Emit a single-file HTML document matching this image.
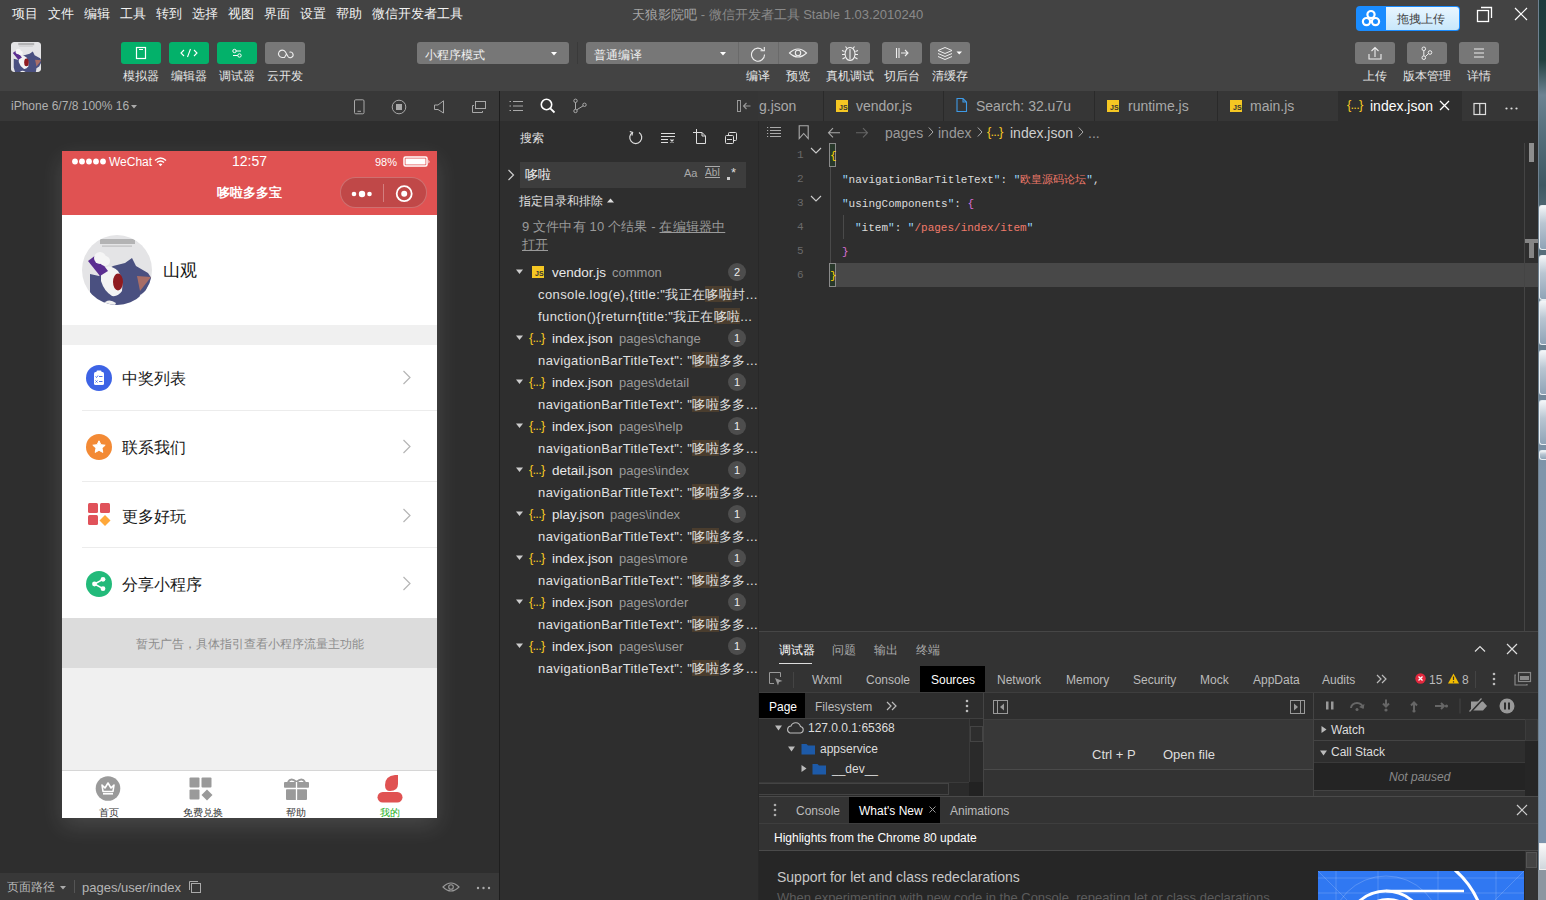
<!DOCTYPE html>
<html><head><meta charset="utf-8">
<style>
*{box-sizing:border-box;margin:0;padding:0}
html,body{width:1546px;height:900px;overflow:hidden;background:#434343;font-family:"Liberation Sans",sans-serif;}
.a{position:absolute}
.t{position:absolute;white-space:nowrap;line-height:1}
svg{position:absolute;overflow:visible}
.code{font-family:"Liberation Mono",monospace;font-size:11px;color:#dcdcdc}
.q{color:#9cdcfe}
.nm{font-size:13.5px;color:#e8e8e8}
.pth{font-size:13px;color:#9a9a9a}
.ln{font-size:13px;color:#e0e0e0;letter-spacing:0.4px}
.dt{top:674px;font-size:12px;color:#bbb}
.sv{color:#f07a6a}
/* top */
#top{left:0;top:0;width:1538px;height:91px;background:#434343}
.mi{top:7px;font-size:13px;color:#f2f2f2}
.gb{top:42px;width:40px;height:22px;border-radius:3px;background:#03b16a}
.gyb{top:42px;width:40px;height:22px;border-radius:3px;background:#787878}
.lbl{top:70px;font-size:12px;color:#e6e6e6;text-align:center;width:80px}
#desk{left:1538px;top:0;width:8px;height:900px;border-left:1px solid #6f8190;background:linear-gradient(#1d3a3c 0,#22403f 60px,#6c8292 95px,#5a7380 125px,#3e5862 185px,#4d6570 205px,#7f95aa 470px,#7c93ab 840px)}
/* simulator */
#sim{left:0;top:91px;width:499px;height:809px;background:#2e2e2e}
#simhd{left:0;top:91px;width:499px;height:30px;background:#383838}
#simft{left:0;top:873px;width:499px;height:27px;background:#383838}
#div1{left:499px;top:91px;width:1px;height:809px;background:#1e1e1e}
/* sidebar */
#side{left:500px;top:91px;width:258px;height:809px;background:#2e2e2e}
#sidehd{left:500px;top:91px;width:258px;height:30px;background:#353535}
/* editor */
#ed{left:758px;top:91px;width:780px;height:541px;background:#2e2e2e}
#tabs{left:758px;top:91px;width:780px;height:30px;background:#363636}
</style></head><body>
<div id="top" class="a"></div>
<div id="desk" class="a"></div>
<div class="a" style="left:1539px;top:205px;width:7px;height:45px;border:1px solid #e8eef2;border-right:none;border-radius:3px 0 0 3px;background:linear-gradient(#f4f6f8,#b9c6d2 40%,#8fa3b6)"></div>
<div class="a" style="left:1539px;top:255px;width:7px;height:45px;border:1px solid #e8eef2;border-right:none;border-radius:3px 0 0 3px;background:linear-gradient(#f4f6f8,#b9c6d2 40%,#8fa3b6)"></div>
<div class="a" style="left:1539px;top:300px;width:7px;height:45px;border:1px solid #e8eef2;border-right:none;border-radius:3px 0 0 3px;background:linear-gradient(#f4f6f8,#b9c6d2 40%,#8fa3b6)"></div>
<div class="a" style="left:1539px;top:350px;width:7px;height:45px;border:1px solid #e8eef2;border-right:none;border-radius:3px 0 0 3px;background:linear-gradient(#f4f6f8,#b9c6d2 40%,#8fa3b6)"></div>
<div class="a" style="left:1539px;top:400px;width:7px;height:45px;border:1px solid #e8eef2;border-right:none;border-radius:3px 0 0 3px;background:linear-gradient(#f4f6f8,#b9c6d2 40%,#8fa3b6)"></div>
<div class="a" style="left:1539px;top:450px;width:7px;height:10px;border:1px solid #e8eef2;border-right:none;border-radius:3px 0 0 3px;background:linear-gradient(#f4f6f8,#b9c6d2 40%,#8fa3b6)"></div>
<div class="a" style="left:1539px;top:843px;width:7px;height:27px;border:1px solid #eee;border-right:none;background:linear-gradient(#fafafa,#d0d6dc)"></div>
<div class="a" style="left:1538px;top:870px;width:8px;height:30px;background:#8c96a0"></div>

<div id="sim" class="a"></div>
<div id="simhd" class="a"></div>
<div id="simft" class="a"></div>
<div id="div1" class="a"></div>
<div id="side" class="a"></div>
<div id="sidehd" class="a"></div>
<div id="ed" class="a"></div>
<div id="tabs" class="a"></div>
<div class="a" style="left:758px;top:121px;width:1px;height:779px;background:#282828"></div>

<!-- menu -->
<div class="t mi" style="left:12px">项目</div>
<div class="t mi" style="left:48px">文件</div>
<div class="t mi" style="left:84px">编辑</div>
<div class="t mi" style="left:120px">工具</div>
<div class="t mi" style="left:156px">转到</div>
<div class="t mi" style="left:192px">选择</div>
<div class="t mi" style="left:228px">视图</div>
<div class="t mi" style="left:264px">界面</div>
<div class="t mi" style="left:300px">设置</div>
<div class="t mi" style="left:336px">帮助</div>
<div class="t mi" style="left:372px">微信开发者工具</div>
<div class="t" style="left:632px;top:8px;font-size:13px;color:#a6a6a6">天狼影院吧 <span style="color:#8a8a8a">- 微信开发者工具 Stable 1.03.2010240</span></div>


<!-- toolbar -->
<svg width="30" height="30" viewBox="4 4 66 66" style="left:11px;top:42px;overflow:hidden;border-radius:3px"><defs><clipPath id="c1"><rect x="4" y="4" width="66" height="66" rx="6"/></clipPath></defs><g clip-path="url(#c1)"><rect width="74" height="74" fill="#e4e4e6"/>
<rect x="20" y="6" width="35" height="5" fill="#8a8a8a" opacity=".55"/>
<rect x="22" y="12.5" width="30" height="1.2" fill="#999" opacity=".5"/>
<path d="M10 41 L19 43 L25 38 L33 33 L45 30 L52 25 L56 33 L68 40 L72 46 L66 58 L60 62 L58 74 H14 L10 60Z" fill="#4a5080"/>
<path d="M57 43 L71 44 L60 58Z" fill="#a86d66"/>
<path d="M21 36 Q30 30 38 38 Q44 46 42 58 Q38 64 32 63 Q24 58 21 48Z" fill="#f3f3f3"/>
<ellipse cx="38" cy="49" rx="5" ry="8.5" fill="#8f1b20"/>
<path d="M8 28 L16 22 L28 38 L20 43Z" fill="#5b2e91"/>
<circle cx="20" cy="25" r="6" fill="#f5f5f5"/>
<circle cx="25" cy="28" r="5" fill="#f5f5f5"/>
<path d="M22 72 Q28 64 36 70 L34 74 H22Z" fill="#f0f0f0"/></g></svg>
<div class="a gb" style="left:121px"><svg width="40" height="22" style="left:0;top:0"><rect x="15.5" y="5.5" width="9" height="11" fill="none" stroke="#fff" stroke-width="1.2"/><line x1="18" y1="7.5" x2="22" y2="7.5" stroke="#fff" stroke-width="1"/></svg></div>
<div class="a gb" style="left:169px"><svg width="40" height="22" style="left:0;top:0"><path d="M15 8 L12 11 L15 14 M25 8 L28 11 L25 14 M21.5 7 L18.5 15" fill="none" stroke="#fff" stroke-width="1.1"/></svg></div>
<div class="a gb" style="left:217px"><svg width="40" height="22" style="left:0;top:0"><path d="M16 9 H24 M16 13.5 H24" stroke="#fff" stroke-width="1"/><circle cx="17.5" cy="9" r="1.7" fill="#03b16a" stroke="#fff" stroke-width="1"/><circle cx="22.5" cy="13.5" r="1.7" fill="#03b16a" stroke="#fff" stroke-width="1"/></svg></div>
<div class="a gyb" style="left:265px"><svg width="40" height="22" style="left:0;top:0"><path d="M17 15.5 A3.7 3.7 0 1 1 20.3 9.8 L23 14.5 A2.8 2.8 0 1 0 24.5 10.2 M21.5 12 L19.5 15.5 H17" fill="none" stroke="#eee" stroke-width="1.1"/></svg></div>
<div class="t lbl" style="left:101px">模拟器</div>
<div class="t lbl" style="left:149px">编辑器</div>
<div class="t lbl" style="left:197px">调试器</div>
<div class="t lbl" style="left:245px">云开发</div>

<div class="a" style="left:417px;top:42px;width:152px;height:22px;border-radius:3px;background:#777"></div>
<div class="t" style="left:425px;top:49px;font-size:12px;color:#f0f0f0">小程序模式</div>
<svg width="8" height="5" style="left:551px;top:52px"><path d="M0 0 H6 L3 3.5Z" fill="#fff"/></svg>
<div class="a" style="left:577px;top:42px;width:1px;height:22px;background:#3a3a3a"></div>
<div class="a" style="left:586px;top:42px;width:232px;height:22px;border-radius:3px;background:#777"></div>
<div class="a" style="left:738px;top:42px;width:1px;height:22px;background:#6a6a6a"></div>
<div class="a" style="left:778px;top:42px;width:1px;height:22px;background:#6a6a6a"></div>
<div class="t" style="left:594px;top:49px;font-size:12px;color:#f0f0f0">普通编译</div>
<svg width="8" height="5" style="left:720px;top:52px"><path d="M0 0 H6 L3 3.5Z" fill="#fff"/></svg>
<svg width="40" height="22" style="left:739px;top:42px"><path d="M24 8.5 A6.5 6.5 0 1 0 25.5 12.5" fill="none" stroke="#eee" stroke-width="1.1"/><path d="M21.5 8.8 L25.3 8.8 L25.3 5" fill="none" stroke="#eee" stroke-width="1.1"/></svg>
<svg width="40" height="22" style="left:778px;top:42px"><path d="M11.5 11 Q20 3 28.5 11 Q20 19 11.5 11Z" fill="none" stroke="#eee" stroke-width="1.1"/><circle cx="20" cy="11" r="2.7" fill="none" stroke="#eee" stroke-width="1.1"/></svg>
<div class="a" style="left:830px;top:42px;width:40px;height:22px;border-radius:3px;background:#777"></div>
<svg width="40" height="22" style="left:830px;top:42px"><path d="M20 5.5 a5 6.5 0 1 0 0.1 0Z M20 7 V17.5 M17 6.5 L15.5 4.5 M23 6.5 L24.5 4.5 M14.5 9.5 L12 8.5 M25.5 9.5 L28 8.5 M14.5 12.5 H12 M25.5 12.5 H28 M15 15.5 L12.5 17 M25 15.5 L27.5 17" fill="none" stroke="#eee" stroke-width="1.1"/></svg>
<div class="a" style="left:882px;top:42px;width:40px;height:22px;border-radius:3px;background:#777"></div>
<svg width="40" height="22" style="left:882px;top:42px"><path d="M14.5 6 V16 M17 6 V16 M19 11 H26 M23 8 L26 11 L23 14" fill="none" stroke="#eee" stroke-width="1.1"/></svg>
<div class="a" style="left:930px;top:42px;width:40px;height:22px;border-radius:3px;background:#777"></div>
<svg width="40" height="22" style="left:930px;top:42px"><path d="M8 8.5 L15 5.5 L22 8.5 L15 11.5Z M8 11.5 L15 14.5 L22 11.5 M8 14.5 L15 17.5 L22 14.5" fill="none" stroke="#eee" stroke-width="1"/><path d="M26.5 9.5 H32 L29.25 12.5Z" fill="#fff"/></svg>
<div class="t lbl" style="left:718px">编译</div>
<div class="t lbl" style="left:758px">预览</div>
<div class="t lbl" style="left:810px">真机调试</div>
<div class="t lbl" style="left:862px">切后台</div>
<div class="t lbl" style="left:910px">清缓存</div>

<div class="a" style="left:1356px;top:6px;width:104px;height:25px;border-radius:4px;background:#1a8cff;"></div>
<div class="a" style="left:1386px;top:7px;width:73px;height:23px;border-radius:0 3px 3px 0;background:linear-gradient(#e9f6ff,#c8e7fb)"></div>
<svg width="30" height="25" style="left:1356px;top:6px"><circle cx="15" cy="8.6" r="3.6" fill="none" stroke="#fff" stroke-width="2.2"/><circle cx="10.5" cy="15.6" r="3.6" fill="none" stroke="#fff" stroke-width="2.2"/><circle cx="19.5" cy="15.6" r="3.6" fill="none" stroke="#fff" stroke-width="2.2"/></svg>
<div class="t" style="left:1397px;top:13px;font-size:12px;color:#444">拖拽上传</div>
<svg width="18" height="18" style="left:1476px;top:5px"><rect x="1.5" y="5.5" width="11" height="11" fill="none" stroke="#fff" stroke-width="1.3"/><path d="M5 2.5 H15.5 V13" fill="none" stroke="#fff" stroke-width="1.3"/></svg>
<svg width="14" height="14" style="left:1514px;top:7px"><path d="M1 1 L13 13 M13 1 L1 13" stroke="#fff" stroke-width="1.2"/></svg>
<div class="a" style="left:1355px;top:42px;width:40px;height:22px;border-radius:3px;background:#777"></div>
<svg width="40" height="22" style="left:1355px;top:42px"><path d="M14 12 V17 H26 V12 M20 15 V6 M16.5 9 L20 5.5 L23.5 9" fill="none" stroke="#eee" stroke-width="1.1"/></svg>
<div class="a" style="left:1407px;top:42px;width:40px;height:22px;border-radius:3px;background:#777"></div>
<svg width="40" height="22" style="left:1407px;top:42px"><circle cx="16.8" cy="6.8" r="1.8" fill="none" stroke="#eee" stroke-width="1"/><circle cx="16.8" cy="15.7" r="1.8" fill="none" stroke="#eee" stroke-width="1"/><circle cx="23" cy="10.5" r="1.8" fill="none" stroke="#eee" stroke-width="1"/><path d="M16.8 8.6 V13.9 M18.3 14.6 L21.5 11.6" fill="none" stroke="#eee" stroke-width="1"/></svg>
<div class="a" style="left:1459px;top:42px;width:40px;height:22px;border-radius:3px;background:#777"></div>
<svg width="40" height="22" style="left:1459px;top:42px"><path d="M15 7 H25 M15 11 H25 M15 15 H25" stroke="#eee" stroke-width="1.1"/></svg>
<div class="t lbl" style="left:1335px">上传</div>
<div class="t lbl" style="left:1387px">版本管理</div>
<div class="t lbl" style="left:1439px">详情</div>


<!-- simulator header -->
<div class="t" style="left:11px;top:100px;font-size:12px;color:#b0b0b0">iPhone 6/7/8 100% 16</div>
<svg width="7" height="4" style="left:131px;top:105px"><path d="M0 0 H6 L3 3.5Z" fill="#aaa"/></svg>
<svg width="12" height="16" style="left:353px;top:99px"><rect x="1.5" y="0.8" width="9.5" height="14" rx="1.2" fill="none" stroke="#a8a8a8" stroke-width="1"/><line x1="4.5" y1="12.3" x2="8" y2="12.3" stroke="#a8a8a8" stroke-width="1"/></svg>
<svg width="16" height="16" style="left:391px;top:99px"><circle cx="8" cy="8" r="6.8" fill="none" stroke="#a8a8a8" stroke-width="1"/><rect x="5" y="5" width="6" height="6" fill="#a8a8a8"/></svg>
<svg width="12" height="14" style="left:433px;top:100px"><path d="M10.5 0.8 V13 L5 9.5 H1.5 V5 H5Z" fill="none" stroke="#a8a8a8" stroke-width="1"/></svg>
<svg width="16" height="14" style="left:472px;top:101px"><rect x="3.5" y="0.5" width="10" height="7" fill="none" stroke="#a8a8a8" stroke-width="1"/><path d="M2 4.5 H0.5 V11.5 H10.5 V10" fill="none" stroke="#a8a8a8" stroke-width="1"/></svg>

<!-- phone -->
<div class="a" style="left:62px;top:151px;width:375px;height:667px;background:#f0f0f0;box-shadow:0 8px 22px rgba(255,255,255,.13)"></div>
<div class="a" style="left:62px;top:151px;width:375px;height:64px;background:#e05252"></div>
<svg width="40" height="10" style="left:71px;top:157px"><circle cx="4" cy="4.5" r="2.9" fill="#fff"/><circle cx="11" cy="4.5" r="2.9" fill="#fff"/><circle cx="18" cy="4.5" r="2.9" fill="#fff"/><circle cx="25" cy="4.5" r="2.9" fill="#fff"/><circle cx="32" cy="4.5" r="2.9" fill="#fff"/></svg>
<div class="t" style="left:109px;top:156px;font-size:12px;color:#fff">WeChat</div>
<svg width="14" height="10" style="left:154px;top:157px"><path d="M1 3.5 Q6.5 -1.5 12 3.5 M3 5.6 Q6.5 2.3 10 5.6" fill="none" stroke="#fff" stroke-width="1.4"/><path d="M4.6 7.2 Q6.5 5.7 8.4 7.2 L6.5 9.3Z" fill="#fff"/></svg>
<div class="t" style="left:232px;top:154px;font-size:14px;color:#fff">12:57</div>
<div class="t" style="left:375px;top:157px;font-size:11px;color:#fff">98%</div>
<svg width="28" height="11" style="left:403px;top:156px"><rect x="1" y="1" width="23" height="9" rx="1.5" fill="none" stroke="#fff" stroke-width="1.5"/><rect x="2.5" y="2.5" width="20" height="6" fill="#fff"/><path d="M25.5 3.5 Q27.3 5.5 25.5 7.5Z" fill="#fff"/></svg>
<div class="t" style="left:62px;top:186px;width:375px;text-align:center;font-size:13px;color:#fff;font-weight:bold">哆啦多多宝</div>
<div class="a" style="left:340px;top:177px;width:87px;height:31px;border-radius:16px;background:#c04848;border:1px solid rgba(255,255,255,.22)"></div>
<div class="a" style="left:383px;top:184px;width:1px;height:18px;background:rgba(255,255,255,.3)"></div>
<svg width="30" height="12" style="left:347px;top:188px"><circle cx="7" cy="6" r="2.3" fill="#fff"/><circle cx="15" cy="6" r="3.2" fill="#fff"/><circle cx="22.5" cy="6" r="2.3" fill="#fff"/></svg>
<svg width="20" height="20" style="left:394px;top:184px"><circle cx="10.2" cy="9.7" r="7.5" fill="none" stroke="#fff" stroke-width="1.8"/><circle cx="10.2" cy="9.7" r="3" fill="#fff"/></svg>

<!-- profile -->
<div class="a" style="left:62px;top:215px;width:375px;height:110px;background:#fff"></div>
<svg width="74" height="74" viewBox="0 0 74 74" style="left:80px;top:233px"><defs><clipPath id="c2"><circle cx="37" cy="37" r="35"/></clipPath></defs><g clip-path="url(#c2)"><rect width="74" height="74" fill="#e4e4e6"/>
<rect x="20" y="6" width="35" height="5" fill="#8a8a8a" opacity=".55"/>
<rect x="22" y="12.5" width="30" height="1.2" fill="#999" opacity=".5"/>
<path d="M10 41 L19 43 L25 38 L33 33 L45 30 L52 25 L56 33 L68 40 L72 46 L66 58 L60 62 L58 74 H14 L10 60Z" fill="#4a5080"/>
<path d="M57 43 L71 44 L60 58Z" fill="#a86d66"/>
<path d="M21 36 Q30 30 38 38 Q44 46 42 58 Q38 64 32 63 Q24 58 21 48Z" fill="#f3f3f3"/>
<ellipse cx="38" cy="49" rx="5" ry="8.5" fill="#8f1b20"/>
<path d="M8 28 L16 22 L28 38 L20 43Z" fill="#5b2e91"/>
<circle cx="20" cy="25" r="6" fill="#f5f5f5"/>
<circle cx="25" cy="28" r="5" fill="#f5f5f5"/>
<path d="M22 72 Q28 64 36 70 L34 74 H22Z" fill="#f0f0f0"/></g></svg>
<div class="t" style="left:163px;top:262px;font-size:17px;color:#111">山观</div>

<!-- menu list -->
<div class="a" style="left:62px;top:345px;width:375px;height:273px;background:#fff"></div>
<div class="a" style="left:82px;top:410px;width:355px;height:1px;background:#ececec"></div>
<div class="a" style="left:82px;top:481px;width:355px;height:1px;background:#ececec"></div>
<div class="a" style="left:82px;top:547px;width:355px;height:1px;background:#ececec"></div>

<svg width="26" height="26" style="left:86px;top:365px"><circle cx="13" cy="13" r="13" fill="#3d63e5"/><rect x="8" y="7" width="10" height="13" rx="1.5" fill="#fff"/><rect x="10.5" y="5.5" width="5" height="3" rx="1" fill="#fff"/><path d="M9.5 11.5 L10.5 12.5 L12 10.5 M13 11.5 H16.5 M9.5 15.5 L11.5 17.5 M11.5 15.5 L9.5 17.5 M13 16.5 H16.5" stroke="#3d63e5" stroke-width="0.9" fill="none"/></svg>
<div class="t" style="left:122px;top:371px;font-size:16px;color:#1a1a1a">中奖列表</div>
<svg width="26" height="26" style="left:86px;top:434px"><circle cx="13" cy="13" r="13" fill="#f38a35"/><path d="M13 6.8 L14.9 10.7 L19.2 11.2 L16 14.1 L16.8 18.4 L13 16.3 L9.2 18.4 L10 14.1 L6.8 11.2 L11.1 10.7Z" fill="#fff" stroke="#fff" stroke-width="1" stroke-linejoin="round"/></svg>
<div class="t" style="left:122px;top:440px;font-size:16px;color:#1a1a1a">联系我们</div>
<svg width="26" height="26" style="left:87px;top:502px"><rect x="1" y="1" width="10" height="10" rx="1.5" fill="#e0525a"/><rect x="13" y="1" width="10" height="10" rx="1.5" fill="#e0525a"/><rect x="1" y="13" width="10" height="10" rx="1.5" fill="#e0525a"/><path d="M18 13 L23.5 18.5 L18 24 L12.5 18.5Z" fill="#ffa83a"/></svg>
<div class="t" style="left:122px;top:509px;font-size:16px;color:#1a1a1a">更多好玩</div>
<svg width="26" height="26" style="left:86px;top:571px"><circle cx="13" cy="13" r="13" fill="#22ba7a"/><circle cx="8.5" cy="13" r="2.4" fill="#fff"/><circle cx="17" cy="8.3" r="2.4" fill="#fff"/><circle cx="17" cy="17.7" r="2.4" fill="#fff"/><path d="M8.5 13 L17 8.3 M8.5 13 L17 17.7" stroke="#fff" stroke-width="1.5"/></svg>
<div class="t" style="left:122px;top:577px;font-size:16px;color:#1a1a1a">分享小程序</div>
<svg width="10" height="16" style="left:402px;top:370px"><path d="M1.5 1 L8 7.5 L1.5 14" fill="none" stroke="#b5b5b5" stroke-width="1.2"/></svg>
<svg width="10" height="16" style="left:402px;top:439px"><path d="M1.5 1 L8 7.5 L1.5 14" fill="none" stroke="#b5b5b5" stroke-width="1.2"/></svg>
<svg width="10" height="16" style="left:402px;top:508px"><path d="M1.5 1 L8 7.5 L1.5 14" fill="none" stroke="#b5b5b5" stroke-width="1.2"/></svg>
<svg width="10" height="16" style="left:402px;top:576px"><path d="M1.5 1 L8 7.5 L1.5 14" fill="none" stroke="#b5b5b5" stroke-width="1.2"/></svg>

<div class="a" style="left:62px;top:618px;width:375px;height:50px;background:#dcdcdc"></div>
<div class="t" style="left:62px;top:638px;width:375px;text-align:center;font-size:12px;color:#8c8c8c">暂无广告，具体指引查看小程序流量主功能</div>

<!-- tab bar -->
<div class="a" style="left:62px;top:770px;width:375px;height:48px;background:#fff;border-top:1px solid #d6d6d6"></div>
<svg width="26" height="26" style="left:95px;top:776px"><circle cx="13" cy="12.5" r="12.3" fill="#9a9a9a"/><path d="M7 9 L10 12 L13 7 L16 12 L19 9 L18 15.5 H8Z" fill="none" stroke="#fff" stroke-width="1.6" stroke-linejoin="round"/><path d="M8 17.8 H18" stroke="#fff" stroke-width="1.6"/></svg>
<svg width="26" height="26" style="left:189px;top:777px"><rect x="0.5" y="0.5" width="10" height="10" rx="1" fill="#9a9a9a"/><rect x="12.5" y="0.5" width="10" height="10" rx="1" fill="#9a9a9a"/><rect x="0.5" y="12.5" width="10" height="10" rx="1" fill="#9a9a9a"/><path d="M18 12.5 L23.5 18 L18 23.5 L12.5 18Z" fill="#9a9a9a"/></svg>
<svg width="28" height="26" style="left:283px;top:776px"><path d="M5 6 Q8 1 13.5 6 Q19 1 22 6" fill="none" stroke="#9a9a9a" stroke-width="2"/><rect x="1" y="6" width="25" height="6" rx="1" fill="#9a9a9a"/><rect x="3" y="13" width="21" height="11" rx="1" fill="#9a9a9a"/><path d="M13.5 6 V24 M1 12.5 H26" stroke="#fff" stroke-width="1.3"/></svg>
<svg width="28" height="28" style="left:376px;top:775px"><path d="M9 10 Q9 1 19 0 H22 V9 Q22 16 14 16 Q9 16 9 10Z" fill="#e05252"/><rect x="1.5" y="17" width="25" height="10.5" rx="5.2" fill="#e05252"/></svg>
<div class="t" style="left:62px;top:808px;width:94px;text-align:center;font-size:10px;color:#333">首页</div>
<div class="t" style="left:156px;top:808px;width:94px;text-align:center;font-size:10px;color:#333">免费兑换</div>
<div class="t" style="left:249px;top:808px;width:94px;text-align:center;font-size:10px;color:#333">帮助</div>
<div class="t" style="left:343px;top:808px;width:94px;text-align:center;font-size:10px;color:#1aad19">我的</div>

<!-- sim footer -->
<div class="t" style="left:7px;top:881px;font-size:12px;color:#b5b5b5">页面路径</div>
<svg width="7" height="4" style="left:60px;top:886px"><path d="M0 0 H6 L3 3.5Z" fill="#aaa"/></svg>
<div class="a" style="left:74px;top:880px;width:1px;height:13px;background:#555"></div>
<div class="t" style="left:82px;top:881px;font-size:13px;color:#b5b5b5">pages/user/index</div>
<svg width="14" height="14" style="left:188px;top:880px"><rect x="3.5" y="3.5" width="9" height="9" fill="none" stroke="#aaa" stroke-width="1"/><path d="M1.5 10 V1.5 H10" fill="none" stroke="#aaa" stroke-width="1"/></svg>
<svg width="18" height="12" style="left:442px;top:881px"><path d="M1 6 Q9 -2 17 6 Q9 14 1 6Z" fill="none" stroke="#9a9a9a" stroke-width="1.1"/><circle cx="9" cy="6" r="2.3" fill="none" stroke="#9a9a9a" stroke-width="1.1"/></svg>
<svg width="16" height="4" style="left:476px;top:886px"><circle cx="2" cy="2" r="1.2" fill="#aaa"/><circle cx="7.5" cy="2" r="1.2" fill="#aaa"/><circle cx="13" cy="2" r="1.2" fill="#aaa"/></svg>


<!-- sidebar header -->
<svg width="16" height="14" style="left:508px;top:99px"><path d="M5 2.5 H15 M5 7 H15 M5 11.5 H15" stroke="#aaa" stroke-width="1.2"/><path d="M1.5 2.5 H3 M1.5 7 H3 M1.5 11.5 H3" stroke="#aaa" stroke-width="1.2"/></svg>
<svg width="16" height="16" style="left:540px;top:98px"><circle cx="6.5" cy="6.5" r="5.2" fill="none" stroke="#fff" stroke-width="1.6"/><path d="M10.3 10.3 L14.5 14.5" stroke="#fff" stroke-width="1.8"/></svg>
<svg width="16" height="16" style="left:572px;top:98px"><circle cx="3.5" cy="2.8" r="1.7" fill="none" stroke="#aaa" stroke-width="1"/><circle cx="3.5" cy="13" r="1.7" fill="none" stroke="#aaa" stroke-width="1"/><circle cx="12.5" cy="6.8" r="1.7" fill="none" stroke="#aaa" stroke-width="1"/><path d="M3.5 4.5 V11.3 M4.8 11.8 L11.2 7.8" stroke="#aaa" stroke-width="1"/></svg>
<svg width="16" height="14" style="left:736px;top:99px"><rect x="1.5" y="1.5" width="3" height="11" fill="none" stroke="#999" stroke-width="1"/><path d="M14.5 7 H7.5 M10.5 4 L7.5 7 L10.5 10" fill="none" stroke="#999" stroke-width="1.1"/></svg>

<div class="t" style="left:520px;top:132px;font-size:12px;color:#e0e0e0">搜索</div>
<svg width="16" height="16" style="left:628px;top:130px"><path d="M4.5 2.5 A6 6 0 1 0 11 2.5" fill="none" stroke="#ddd" stroke-width="1.2"/><path d="M1.8 1.5 L4.6 2.5 L3.9 5.5" fill="none" stroke="#ddd" stroke-width="1.2"/></svg>
<svg width="16" height="16" style="left:660px;top:131px"><path d="M1 2.5 H15 M1 5.5 H15 M1 8.5 H8 M1 11.5 H8" stroke="#ddd" stroke-width="1"/><path d="M10.5 8.5 L13.5 11.5 M13.5 8.5 L10.5 11.5" stroke="#ddd" stroke-width="1.2"/></svg>
<svg width="16" height="16" style="left:692px;top:129px"><path d="M4.5 3.5 H10 L13.5 7 V14.5 H4.5Z M10 3.5 V7 H13.5" fill="none" stroke="#ddd" stroke-width="1"/><path d="M1 3.5 H7 M4.5 0 V6.5" stroke="#ddd" stroke-width="1"/></svg>
<svg width="16" height="16" style="left:724px;top:131px"><rect x="4.5" y="1.5" width="8" height="8" rx="1" fill="none" stroke="#ddd" stroke-width="1"/><rect x="1.5" y="4.5" width="8" height="8" rx="1" fill="#2e2e2e" stroke="#ddd" stroke-width="1"/><path d="M3 8.5 H8" stroke="#ddd" stroke-width="1"/></svg>

<svg width="8" height="12" style="left:507px;top:169px"><path d="M1.5 1 L6.5 6 L1.5 11" fill="none" stroke="#ccc" stroke-width="1.2"/></svg>
<div class="a" style="left:520px;top:162px;width:226px;height:26px;background:#3d3d3d"></div>
<div class="t" style="left:525px;top:168px;font-size:13px;color:#eee">哆啦</div>
<div class="t" style="left:684px;top:168px;font-size:11px;color:#aaa">Aa</div>
<div class="t" style="left:705px;top:168px;font-size:10px;color:#aaa;text-decoration:underline overline">AbI</div>
<div class="a" style="left:727px;top:177px;width:3px;height:3px;background:#ccc"></div><div class="t" style="left:731px;top:166px;font-size:13px;color:#ddd">*</div>

<div class="t" style="left:519px;top:195px;font-size:12px;color:#e0e0e0">指定目录和排除</div>
<svg width="8" height="6" style="left:607px;top:198px"><path d="M0 4.5 H7 L3.5 0.5Z" fill="#ddd"/></svg>
<div class="t" style="left:522px;top:220px;font-size:13px;color:#9a9a9a;letter-spacing:0.15px">9 文件中有 10 个结果 - <span style="text-decoration:underline">在编辑器中</span></div>
<div class="t" style="left:522px;top:238px;font-size:13px;color:#9a9a9a;text-decoration:underline">打开</div>
<svg width="8" height="6" style="left:516px;top:269px"><path d="M0 0.5 H7 L3.5 5Z" fill="#ccc"/></svg>
<div class="a" style="left:532px;top:266px;width:12px;height:12px;background:#f5c723"></div><div class="t" style="left:535px;top:270px;font-size:7px;color:#333;font-weight:bold">JS</div>
<div class="t nm" style="left:552px;top:266px">vendor.js</div>
<div class="t pth" style="left:612px;top:266px">common</div>
<div class="a" style="left:728px;top:263px;width:18px;height:18px;border-radius:9px;background:#4d4d4d"></div><div class="t" style="left:728px;top:267px;width:18px;text-align:center;font-size:11px;color:#eee">2</div>
<div class="t ln" style="left:538px;top:288px">console.log(e),{title:"我正在<span style="background:#4a3d2e;display:inline-block;padding:2px 0 1px;margin:-2px 0 -1px">哆啦</span>封...</div>
<div class="t ln" style="left:538px;top:310px">function(){return{title:"我正在<span style="background:#4a3d2e;display:inline-block;padding:2px 0 1px;margin:-2px 0 -1px">哆啦</span>...</div>
<svg width="8" height="6" style="left:516px;top:335px"><path d="M0 0.5 H7 L3.5 5Z" fill="#ccc"/></svg>
<div class="t" style="left:529px;top:331px;font-size:13px;color:#f5c723;letter-spacing:-0.8px">{...}</div>
<div class="t nm" style="left:552px;top:332px">index.json</div>
<div class="t pth" style="left:619px;top:332px">pages\change</div>
<div class="a" style="left:728px;top:329px;width:18px;height:18px;border-radius:9px;background:#4d4d4d"></div><div class="t" style="left:728px;top:333px;width:18px;text-align:center;font-size:11px;color:#eee">1</div>
<div class="t ln" style="left:538px;top:354px">navigationBarTitleText": "<span style="background:#4a3d2e;display:inline-block;padding:2px 0 1px;margin:-2px 0 -1px">哆啦</span>多多...</div>
<svg width="8" height="6" style="left:516px;top:379px"><path d="M0 0.5 H7 L3.5 5Z" fill="#ccc"/></svg>
<div class="t" style="left:529px;top:375px;font-size:13px;color:#f5c723;letter-spacing:-0.8px">{...}</div>
<div class="t nm" style="left:552px;top:376px">index.json</div>
<div class="t pth" style="left:619px;top:376px">pages\detail</div>
<div class="a" style="left:728px;top:373px;width:18px;height:18px;border-radius:9px;background:#4d4d4d"></div><div class="t" style="left:728px;top:377px;width:18px;text-align:center;font-size:11px;color:#eee">1</div>
<div class="t ln" style="left:538px;top:398px">navigationBarTitleText": "<span style="background:#4a3d2e;display:inline-block;padding:2px 0 1px;margin:-2px 0 -1px">哆啦</span>多多...</div>
<svg width="8" height="6" style="left:516px;top:423px"><path d="M0 0.5 H7 L3.5 5Z" fill="#ccc"/></svg>
<div class="t" style="left:529px;top:419px;font-size:13px;color:#f5c723;letter-spacing:-0.8px">{...}</div>
<div class="t nm" style="left:552px;top:420px">index.json</div>
<div class="t pth" style="left:619px;top:420px">pages\help</div>
<div class="a" style="left:728px;top:417px;width:18px;height:18px;border-radius:9px;background:#4d4d4d"></div><div class="t" style="left:728px;top:421px;width:18px;text-align:center;font-size:11px;color:#eee">1</div>
<div class="t ln" style="left:538px;top:442px">navigationBarTitleText": "<span style="background:#4a3d2e;display:inline-block;padding:2px 0 1px;margin:-2px 0 -1px">哆啦</span>多多...</div>
<svg width="8" height="6" style="left:516px;top:467px"><path d="M0 0.5 H7 L3.5 5Z" fill="#ccc"/></svg>
<div class="t" style="left:529px;top:463px;font-size:13px;color:#f5c723;letter-spacing:-0.8px">{...}</div>
<div class="t nm" style="left:552px;top:464px">detail.json</div>
<div class="t pth" style="left:619px;top:464px">pages\index</div>
<div class="a" style="left:728px;top:461px;width:18px;height:18px;border-radius:9px;background:#4d4d4d"></div><div class="t" style="left:728px;top:465px;width:18px;text-align:center;font-size:11px;color:#eee">1</div>
<div class="t ln" style="left:538px;top:486px">navigationBarTitleText": "<span style="background:#4a3d2e;display:inline-block;padding:2px 0 1px;margin:-2px 0 -1px">哆啦</span>多多...</div>
<svg width="8" height="6" style="left:516px;top:511px"><path d="M0 0.5 H7 L3.5 5Z" fill="#ccc"/></svg>
<div class="t" style="left:529px;top:507px;font-size:13px;color:#f5c723;letter-spacing:-0.8px">{...}</div>
<div class="t nm" style="left:552px;top:508px">play.json</div>
<div class="t pth" style="left:610px;top:508px">pages\index</div>
<div class="a" style="left:728px;top:505px;width:18px;height:18px;border-radius:9px;background:#4d4d4d"></div><div class="t" style="left:728px;top:509px;width:18px;text-align:center;font-size:11px;color:#eee">1</div>
<div class="t ln" style="left:538px;top:530px">navigationBarTitleText": "<span style="background:#4a3d2e;display:inline-block;padding:2px 0 1px;margin:-2px 0 -1px">哆啦</span>多多...</div>
<svg width="8" height="6" style="left:516px;top:555px"><path d="M0 0.5 H7 L3.5 5Z" fill="#ccc"/></svg>
<div class="t" style="left:529px;top:551px;font-size:13px;color:#f5c723;letter-spacing:-0.8px">{...}</div>
<div class="t nm" style="left:552px;top:552px">index.json</div>
<div class="t pth" style="left:619px;top:552px">pages\more</div>
<div class="a" style="left:728px;top:549px;width:18px;height:18px;border-radius:9px;background:#4d4d4d"></div><div class="t" style="left:728px;top:553px;width:18px;text-align:center;font-size:11px;color:#eee">1</div>
<div class="t ln" style="left:538px;top:574px">navigationBarTitleText": "<span style="background:#4a3d2e;display:inline-block;padding:2px 0 1px;margin:-2px 0 -1px">哆啦</span>多多...</div>
<svg width="8" height="6" style="left:516px;top:599px"><path d="M0 0.5 H7 L3.5 5Z" fill="#ccc"/></svg>
<div class="t" style="left:529px;top:595px;font-size:13px;color:#f5c723;letter-spacing:-0.8px">{...}</div>
<div class="t nm" style="left:552px;top:596px">index.json</div>
<div class="t pth" style="left:619px;top:596px">pages\order</div>
<div class="a" style="left:728px;top:593px;width:18px;height:18px;border-radius:9px;background:#4d4d4d"></div><div class="t" style="left:728px;top:597px;width:18px;text-align:center;font-size:11px;color:#eee">1</div>
<div class="t ln" style="left:538px;top:618px">navigationBarTitleText": "<span style="background:#4a3d2e;display:inline-block;padding:2px 0 1px;margin:-2px 0 -1px">哆啦</span>多多...</div>
<svg width="8" height="6" style="left:516px;top:643px"><path d="M0 0.5 H7 L3.5 5Z" fill="#ccc"/></svg>
<div class="t" style="left:529px;top:639px;font-size:13px;color:#f5c723;letter-spacing:-0.8px">{...}</div>
<div class="t nm" style="left:552px;top:640px">index.json</div>
<div class="t pth" style="left:619px;top:640px">pages\user</div>
<div class="a" style="left:728px;top:637px;width:18px;height:18px;border-radius:9px;background:#4d4d4d"></div><div class="t" style="left:728px;top:641px;width:18px;text-align:center;font-size:11px;color:#eee">1</div>
<div class="t ln" style="left:538px;top:662px">navigationBarTitleText": "<span style="background:#4a3d2e;display:inline-block;padding:2px 0 1px;margin:-2px 0 -1px">哆啦</span>多多...</div>

<!-- editor tabs -->
<div class="t" style="left:759px;top:99px;font-size:14px;color:#a8a8a8">g.json</div>
<div class="a" style="left:823px;top:91px;width:1px;height:30px;background:#2a2a2a"></div>
<div class="a" style="left:836px;top:100px;width:12px;height:12px;background:#f5c723"></div><div class="t" style="left:839px;top:104px;font-size:7px;color:#333;font-weight:bold">JS</div>
<div class="t" style="left:856px;top:99px;font-size:14px;color:#a8a8a8">vendor.js</div>
<div class="a" style="left:943px;top:91px;width:1px;height:30px;background:#2a2a2a"></div>
<svg width="12" height="15" style="left:956px;top:98px"><path d="M1 0.5 H7 L10.5 4 V13.5 H1Z M7 0.5 V4 H10.5" fill="none" stroke="#3e9ae6" stroke-width="1.1"/></svg>
<div class="t" style="left:976px;top:99px;font-size:14px;color:#a8a8a8">Search: 32.u7u</div>
<div class="a" style="left:1094px;top:91px;width:1px;height:30px;background:#2a2a2a"></div>
<div class="a" style="left:1107px;top:100px;width:12px;height:12px;background:#f5c723"></div><div class="t" style="left:1110px;top:104px;font-size:7px;color:#333;font-weight:bold">JS</div>
<div class="t" style="left:1128px;top:99px;font-size:14px;color:#a8a8a8">runtime.js</div>
<div class="a" style="left:1217px;top:91px;width:1px;height:30px;background:#2a2a2a"></div>
<div class="a" style="left:1230px;top:100px;width:12px;height:12px;background:#f5c723"></div><div class="t" style="left:1233px;top:104px;font-size:7px;color:#333;font-weight:bold">JS</div>
<div class="t" style="left:1250px;top:99px;font-size:14px;color:#a8a8a8">main.js</div>
<div class="a" style="left:1338px;top:91px;width:124px;height:30px;background:#2e2e2e"></div>
<div class="t" style="left:1347px;top:98px;font-size:13px;color:#f5c723;letter-spacing:-0.8px">{...}</div>
<div class="t" style="left:1370px;top:99px;font-size:14px;color:#fff">index.json</div>
<svg width="12" height="12" style="left:1439px;top:100px"><path d="M1 1 L10 10 M10 1 L1 10" stroke="#fff" stroke-width="1.3"/></svg>
<svg width="14" height="14" style="left:1473px;top:102px"><rect x="1" y="1.5" width="11.5" height="11" fill="none" stroke="#ddd" stroke-width="1.2"/><path d="M6.75 1.5 V12.5" stroke="#ddd" stroke-width="1.2"/></svg>
<svg width="14" height="4" style="left:1505px;top:107px"><circle cx="1.5" cy="1.5" r="1.1" fill="#ddd"/><circle cx="6.5" cy="1.5" r="1.1" fill="#ddd"/><circle cx="11.5" cy="1.5" r="1.1" fill="#ddd"/></svg>

<!-- breadcrumbs -->
<svg width="16" height="14" style="left:766px;top:126px"><path d="M4 1.5 H15 M4 4.5 H15 M4 7.5 H15 M4 10.5 H15" stroke="#aaa" stroke-width="1"/><path d="M1 1.5 H2.2 M1 4.5 H2.2 M1 7.5 H2.2 M1 10.5 H2.2" stroke="#aaa" stroke-width="1"/></svg>
<svg width="12" height="15" style="left:798px;top:125px"><path d="M1.2 0.8 H10.2 V13.5 L5.7 8.5 L1.2 13.5Z" fill="none" stroke="#aaa" stroke-width="1.1"/></svg>
<svg width="14" height="12" style="left:827px;top:127px"><path d="M13 5.8 H1.5 M6 1.2 L1.5 5.8 L6 10.4" fill="none" stroke="#aaa" stroke-width="1.1"/></svg>
<svg width="14" height="12" style="left:855px;top:127px"><path d="M1 5.8 H12.5 M8 1.2 L12.5 5.8 L8 10.4" fill="none" stroke="#666" stroke-width="1.1"/></svg>
<div class="t" style="left:885px;top:126px;font-size:14px;color:#9a9a9a">pages</div><svg width="6" height="10" style="left:928px;top:127px"><path d="M0.8 0.5 L5 5 L0.8 9.5" fill="none" stroke="#aaa" stroke-width="1"/></svg><div class="t" style="left:938px;top:126px;font-size:14px;color:#9a9a9a">index</div><svg width="6" height="10" style="left:977px;top:127px"><path d="M0.8 0.5 L5 5 L0.8 9.5" fill="none" stroke="#aaa" stroke-width="1"/></svg><div class="t" style="left:987px;top:125px;font-size:13px;color:#f5c723;letter-spacing:-0.8px">{...}</div><div class="t" style="left:1010px;top:126px;font-size:14px;color:#cfcfcf">index.json</div><svg width="6" height="10" style="left:1078px;top:127px"><path d="M0.8 0.5 L5 5 L0.8 9.5" fill="none" stroke="#aaa" stroke-width="1"/></svg><div class="t" style="left:1088px;top:126px;font-size:14px;color:#9a9a9a">...</div>

<!-- code -->
<div class="a" style="left:829px;top:263px;width:709px;height:24px;background:#484848"></div>
<div class="t" style="left:797px;top:150px;font-family:'Liberation Mono',monospace;font-size:11px;color:#6a6a6a">1</div>
<div class="t" style="left:797px;top:174px;font-family:'Liberation Mono',monospace;font-size:11px;color:#6a6a6a">2</div>
<div class="t" style="left:797px;top:198px;font-family:'Liberation Mono',monospace;font-size:11px;color:#6a6a6a">3</div>
<div class="t" style="left:797px;top:222px;font-family:'Liberation Mono',monospace;font-size:11px;color:#6a6a6a">4</div>
<div class="t" style="left:797px;top:246px;font-family:'Liberation Mono',monospace;font-size:11px;color:#6a6a6a">5</div>
<div class="t" style="left:797px;top:270px;font-family:'Liberation Mono',monospace;font-size:11px;color:#6a6a6a">6</div>
<svg width="12" height="8" style="left:810px;top:147px"><path d="M1 1 L6 6 L11 1" fill="none" stroke="#ccc" stroke-width="1.1"/></svg>
<svg width="12" height="8" style="left:810px;top:195px"><path d="M1 1 L6 6 L11 1" fill="none" stroke="#ccc" stroke-width="1.1"/></svg>
<div class="a" style="left:830px;top:167px;width:1px;height:96px;background:#4a4a4a"></div>
<div class="a" style="left:843px;top:215px;width:1px;height:24px;background:#4a4a4a"></div>
<div class="a" style="left:829px;top:143px;width:7px;height:24px;border:1px solid #8a8a8a;background:#28382a"></div>
<div class="a" style="left:829px;top:263px;width:7px;height:24px;border:1px solid #8a8a8a;background:#28382a"></div>
<div class="t code" style="left:830px;top:151px;color:#ffd700">{</div>
<div class="t code" style="left:842px;top:175px"><span class="q">"</span>navigationBarTitleText<span class="q">"</span>: <span class="q">"</span><span class="sv">欧皇源码论坛</span><span class="q">"</span>,</div>
<div class="t code" style="left:842px;top:199px"><span class="q">"</span>usingComponents<span class="q">"</span>: <span style="color:#da70d6">{</span></div>
<div class="t code" style="left:855px;top:223px"><span class="q">"</span>item<span class="q">"</span>: <span class="q">"</span><span class="sv">/pages/index/item</span><span class="q">"</span></div>
<div class="t code" style="left:842px;top:247px;color:#da70d6">}</div>
<div class="t code" style="left:830px;top:271px;color:#ffd700">}</div>

<!-- editor scrollbar -->
<div class="a" style="left:1524px;top:143px;width:1px;height:489px;background:#444"></div>
<div class="a" style="left:1529px;top:143px;width:5px;height:19px;background:#8e8e8e"></div>
<div class="a" style="left:1525px;top:239px;width:13px;height:4px;background:#858585"></div><div class="a" style="left:1529px;top:239px;width:5px;height:19px;background:#858585"></div>


<!-- devtools -->
<div class="a" style="left:759px;top:631px;width:779px;height:1px;background:#464646"></div>
<div class="a" style="left:759px;top:632px;width:779px;height:268px;background:#333"></div>
<div class="t" style="left:779px;top:644px;font-size:12px;color:#fff">调试器</div>
<div class="a" style="left:779px;top:663px;width:33px;height:1px;background:#ddd"></div>
<div class="t" style="left:832px;top:644px;font-size:12px;color:#aaa">问题</div>
<div class="t" style="left:874px;top:644px;font-size:12px;color:#aaa">输出</div>
<div class="t" style="left:916px;top:644px;font-size:12px;color:#aaa">终端</div>
<svg width="12" height="8" style="left:1474px;top:645px"><path d="M1 6.5 L6 1.5 L11 6.5" fill="none" stroke="#ddd" stroke-width="1.2"/></svg>
<svg width="12" height="12" style="left:1506px;top:643px"><path d="M1 1 L11 11 M11 1 L1 11" stroke="#ddd" stroke-width="1.2"/></svg>

<div class="a" style="left:759px;top:692px;width:779px;height:1px;background:#3e3e3e"></div>
<svg width="16" height="16" style="left:768px;top:671px"><path d="M6 12.5 H1.5 V1.5 H12.5 V6" fill="none" stroke="#999" stroke-width="1"/><path d="M7 7 L14.5 10 L11 11 L10 14.5Z" fill="#999"/></svg>
<div class="a" style="left:793px;top:672px;width:1px;height:16px;background:#444"></div>
<div class="t dt" style="left:812px">Wxml</div>
<div class="t dt" style="left:866px">Console</div>
<div class="a" style="left:920px;top:666px;width:65px;height:26px;background:#000"></div>
<div class="t dt" style="left:931px;color:#fff">Sources</div>
<div class="t dt" style="left:997px">Network</div>
<div class="t dt" style="left:1066px">Memory</div>
<div class="t dt" style="left:1133px">Security</div>
<div class="t dt" style="left:1200px">Mock</div>
<div class="t dt" style="left:1253px">AppData</div>
<div class="t dt" style="left:1322px">Audits</div>
<svg width="12" height="10" style="left:1376px;top:674px"><path d="M1 1 L5 5 L1 9 M6 1 L10 5 L6 9" fill="none" stroke="#bbb" stroke-width="1.2"/></svg>
<svg width="12" height="12" style="left:1415px;top:673px"><circle cx="5.5" cy="5.5" r="5.2" fill="#e3283e"/><path d="M3.5 3.5 L7.5 7.5 M7.5 3.5 L3.5 7.5" stroke="#fff" stroke-width="1.3"/></svg>
<div class="t dt" style="left:1429px">15</div>
<svg width="12" height="12" style="left:1448px;top:673px"><path d="M5.5 0.5 L11 10.5 H0Z" fill="#f4bd00"/><path d="M5.5 3.5 V7 M5.5 8.2 V9.4" stroke="#333" stroke-width="1.2"/></svg>
<div class="t dt" style="left:1462px">8</div>
<div class="a" style="left:1475px;top:671px;width:1px;height:17px;background:#444"></div>
<svg width="4" height="14" style="left:1492px;top:672px"><circle cx="2" cy="2" r="1.3" fill="#bbb"/><circle cx="2" cy="7" r="1.3" fill="#bbb"/><circle cx="2" cy="12" r="1.3" fill="#bbb"/></svg>
<svg width="18" height="14" style="left:1514px;top:672px"><rect x="4.5" y="0.5" width="12" height="9" fill="none" stroke="#888" stroke-width="1.2"/><path d="M2 3 H1 V13 H13 V12" fill="none" stroke="#888" stroke-width="1.2"/><rect x="6" y="4" width="9" height="4" fill="#888"/></svg>

<!-- sources -->
<div class="a" style="left:759px;top:693px;width:225px;height:26px;background:#2e2e2e"></div>
<div class="a" style="left:759px;top:693px;width:46px;height:26px;background:#000"></div>
<div class="t dt" style="left:769px;top:701px;color:#fff">Page</div>
<div class="t dt" style="left:815px;top:701px">Filesystem</div>
<svg width="12" height="10" style="left:886px;top:701px"><path d="M1 1 L5 5 L1 9 M6 1 L10 5 L6 9" fill="none" stroke="#bbb" stroke-width="1.2"/></svg>
<svg width="4" height="14" style="left:965px;top:699px"><circle cx="2" cy="2" r="1.3" fill="#bbb"/><circle cx="2" cy="7" r="1.3" fill="#bbb"/><circle cx="2" cy="12" r="1.3" fill="#bbb"/></svg>
<div class="a" style="left:759px;top:719px;width:225px;height:77px;background:#2e2e2e"></div>
<div class="a" style="left:759px;top:718px;width:225px;height:1px;background:#3f3f3f"></div>
<svg width="8" height="6" style="left:775px;top:725px"><path d="M0 0.5 H7 L3.5 5.5Z" fill="#bbb"/></svg>
<svg width="18" height="12" style="left:786px;top:722px"><path d="M4 11 H14.5 A3.3 3.3 0 0 0 14.5 4.5 A5 5 0 0 0 5 4 A3.6 3.6 0 0 0 4 11Z" fill="none" stroke="#bbb" stroke-width="1.1"/></svg>
<div class="t dt" style="left:808px;top:722px;color:#ddd">127.0.0.1:65368</div>
<svg width="8" height="6" style="left:788px;top:746px"><path d="M0 0.5 H7 L3.5 5.5Z" fill="#bbb"/></svg>
<svg width="15" height="12" style="left:801px;top:743px"><path d="M0.5 1 H5.5 L7 2.5 H14 V11.5 H0.5Z" fill="#1d5aa8"/></svg>
<div class="t dt" style="left:820px;top:743px;color:#ddd">appservice</div>
<svg width="6" height="8" style="left:801px;top:765px"><path d="M0.5 0 V7 L5.5 3.5Z" fill="#bbb"/></svg>
<svg width="15" height="12" style="left:812px;top:763px"><path d="M0.5 1 H5.5 L7 2.5 H14 V11.5 H0.5Z" fill="#1d5aa8"/></svg>
<div class="t dt" style="left:832px;top:763px;color:#ddd">__dev__</div>
<div class="a" style="left:969px;top:719px;width:14px;height:63px;background:#2a2a2a;border-left:1px solid #3a3a3a"></div>
<div class="a" style="left:970px;top:726px;width:13px;height:16px;border:1px solid #444;background:#2e2e2e"></div>
<div class="a" style="left:759px;top:782px;width:210px;height:14px;background:#2b2b2b;border-top:1px solid #3a3a3a"></div>
<div class="a" style="left:759px;top:783px;width:190px;height:12px;border:1px solid #444;border-left:none"></div>
<div class="a" style="left:969px;top:782px;width:14px;height:14px;background:#222"></div>
<div class="a" style="left:983px;top:693px;width:1px;height:103px;background:#444"></div>

<div class="a" style="left:984px;top:693px;width:329px;height:26px;background:#2e2e2e"></div>
<svg width="16" height="14" style="left:993px;top:700px"><rect x="0.5" y="0.5" width="14" height="13" fill="none" stroke="#999" stroke-width="1"/><path d="M4.5 0.5 V13.5" stroke="#999" stroke-width="1"/><path d="M11 3.5 V10.5 L7 7Z" fill="#999"/></svg>
<svg width="16" height="14" style="left:1290px;top:700px"><rect x="0.5" y="0.5" width="14" height="13" fill="none" stroke="#999" stroke-width="1"/><path d="M10.5 0.5 V13.5" stroke="#999" stroke-width="1"/><path d="M4 3.5 V10.5 L8 7Z" fill="#999"/></svg>
<div class="a" style="left:984px;top:719px;width:329px;height:50px;background:#383838;border-top:1px solid #3f3f3f"></div>
<div class="a" style="left:984px;top:769px;width:329px;height:1px;background:#4a4a4a"></div>
<div class="a" style="left:984px;top:770px;width:329px;height:26px;background:#333"></div>
<div class="t" style="left:1092px;top:748px;font-size:13px;color:#ddd">Ctrl + P</div>
<div class="t" style="left:1163px;top:748px;font-size:13px;color:#ddd">Open file</div>
<div class="a" style="left:1313px;top:693px;width:1px;height:103px;background:#444"></div>

<div class="a" style="left:1314px;top:693px;width:224px;height:26px;background:#2e2e2e"></div>
<svg width="200" height="16" style="left:1320px;top:698px">
 <rect x="6" y="3.5" width="2.5" height="8" fill="#999"/><rect x="11" y="3.5" width="2.5" height="8" fill="#999"/>
 <path d="M31 10 A6 5 0 0 1 43 10" fill="none" stroke="#666" stroke-width="2"/><path d="M44.5 6 L43.5 11 L39 9Z" fill="#666"/><circle cx="37" cy="11.5" r="1.5" fill="#666"/>
 <path d="M66 1.5 V8 M63 5.5 L66 8.5 L69 5.5" fill="none" stroke="#666" stroke-width="2"/><circle cx="66" cy="12" r="1.6" fill="#666"/>
 <path d="M94 12 V5 M91 7.5 L94 4.5 L97 7.5" fill="none" stroke="#666" stroke-width="2"/><circle cx="94" cy="13" r="1.6" fill="#666"/>
 <path d="M115 8 H124 M121 5 L124 8 L121 11" fill="none" stroke="#666" stroke-width="2"/><circle cx="126.5" cy="8" r="1.6" fill="#666"/>
 <path d="M140 0.5 V15.5" stroke="#444" stroke-width="1"/>
 <path d="M151 3.5 H163 L167 8 L163 12.5 H151Z" fill="#999"/><path d="M150 14.5 L162 1.5" stroke="#2e2e2e" stroke-width="2.5"/><path d="M149.5 13.5 L161.5 0.5" stroke="#999" stroke-width="1.2"/>
 <circle cx="187" cy="8" r="7.5" fill="#999"/><rect x="184" y="4.5" width="2" height="7" fill="#2e2e2e"/><rect x="188" y="4.5" width="2" height="7" fill="#2e2e2e"/>
</svg>
<div class="a" style="left:1314px;top:719px;width:211px;height:22px;background:#2e2e2e;border-top:1px solid #444;border-bottom:1px solid #444"></div>
<svg width="6" height="8" style="left:1321px;top:726px"><path d="M0.5 0 V7 L5.5 3.5Z" fill="#bbb"/></svg>
<div class="t dt" style="left:1331px;top:724px;color:#ddd">Watch</div>
<div class="a" style="left:1314px;top:741px;width:211px;height:22px;background:#2e2e2e;border-bottom:1px solid #3a3a3a"></div>
<svg width="8" height="6" style="left:1320px;top:750px"><path d="M0 0.5 H7 L3.5 5.5Z" fill="#bbb"/></svg>
<div class="t dt" style="left:1331px;top:746px;color:#ddd">Call Stack</div>
<div class="a" style="left:1314px;top:763px;width:211px;height:28px;background:#242424;border-bottom:1px solid #444"></div>
<div class="t" style="left:1389px;top:771px;font-size:12px;color:#8a8a8a;font-style:italic">Not paused</div>
<div class="a" style="left:1525px;top:719px;width:13px;height:22px;background:#333;border:1px solid #3c3c3c"></div>
<div class="a" style="left:1525px;top:741px;width:13px;height:55px;background:#262626"></div>
<div class="a" style="left:759px;top:796px;width:779px;height:1px;background:#4a4a4a"></div>

<!-- drawer -->
<div class="a" style="left:759px;top:797px;width:779px;height:26px;background:#333"></div>
<svg width="4" height="14" style="left:773px;top:803px"><circle cx="2" cy="2" r="1.3" fill="#aaa"/><circle cx="2" cy="7" r="1.3" fill="#aaa"/><circle cx="2" cy="12" r="1.3" fill="#aaa"/></svg>
<div class="t dt" style="left:796px;top:805px">Console</div>
<div class="a" style="left:849px;top:797px;width:91px;height:26px;background:#000"></div>
<div class="t dt" style="left:859px;top:805px;color:#fff">What's New</div>
<svg width="8" height="8" style="left:929px;top:806px"><path d="M0.5 0.5 L6.5 6.5 M6.5 0.5 L0.5 6.5" stroke="#999" stroke-width="1"/></svg>
<div class="t dt" style="left:950px;top:805px">Animations</div>
<svg width="12" height="12" style="left:1516px;top:804px"><path d="M1 1 L11 11 M11 1 L1 11" stroke="#ccc" stroke-width="1.2"/></svg>
<div class="a" style="left:759px;top:823px;width:779px;height:1px;background:#3e3e3e"></div>
<div class="a" style="left:759px;top:824px;width:779px;height:26px;background:#333"></div>
<div class="t" style="left:774px;top:832px;font-size:12px;color:#fff">Highlights from the Chrome 80 update</div>
<div class="a" style="left:759px;top:850px;width:779px;height:1px;background:#4a4a4a"></div>
<div class="a" style="left:759px;top:851px;width:766px;height:49px;background:#262626"></div>
<div class="t" style="left:777px;top:870px;font-size:14px;color:#c8c8c8">Support for let and class redeclarations</div>
<div class="t" style="left:777px;top:891px;font-size:13px;color:#5c5c5c">When experimenting with new code in the Console, repeating let or class declarations</div>
<div class="a" style="left:1525px;top:851px;width:13px;height:49px;background:#333"></div>
<div class="a" style="left:1526px;top:852px;width:11px;height:16px;background:#444;border:1px solid #555"></div>
<div class="a" style="left:1318px;top:871px;width:206px;height:29px;background:#3078f2;overflow:hidden">
 <svg width="206" height="40" style="left:0;top:0"><path d="M0 7 H206 M0 22 H206 M18 0 V40 M60 0 V40 M120 0 V40 M178 0 V40" stroke="rgba(255,255,255,.22)" stroke-width="0.8"/><path d="M0 0 L40 40 M206 0 L166 40" stroke="rgba(255,255,255,.22)" stroke-width="0.8"/><circle cx="68" cy="60" r="55" fill="none" stroke="rgba(255,255,255,.25)" stroke-width="0.8"/><circle cx="68" cy="60" r="40" fill="none" stroke="#fff" stroke-width="3"/><circle cx="70" cy="59" r="31" fill="none" stroke="#fff" stroke-width="2"/><path d="M68 20 H146" stroke="#fff" stroke-width="2.5"/><path d="M137 -1 Q152 12 160 30" fill="none" stroke="#fff" stroke-width="3"/></svg>
</div>

<!-- BODY_CONTENT -->
</body></html>
